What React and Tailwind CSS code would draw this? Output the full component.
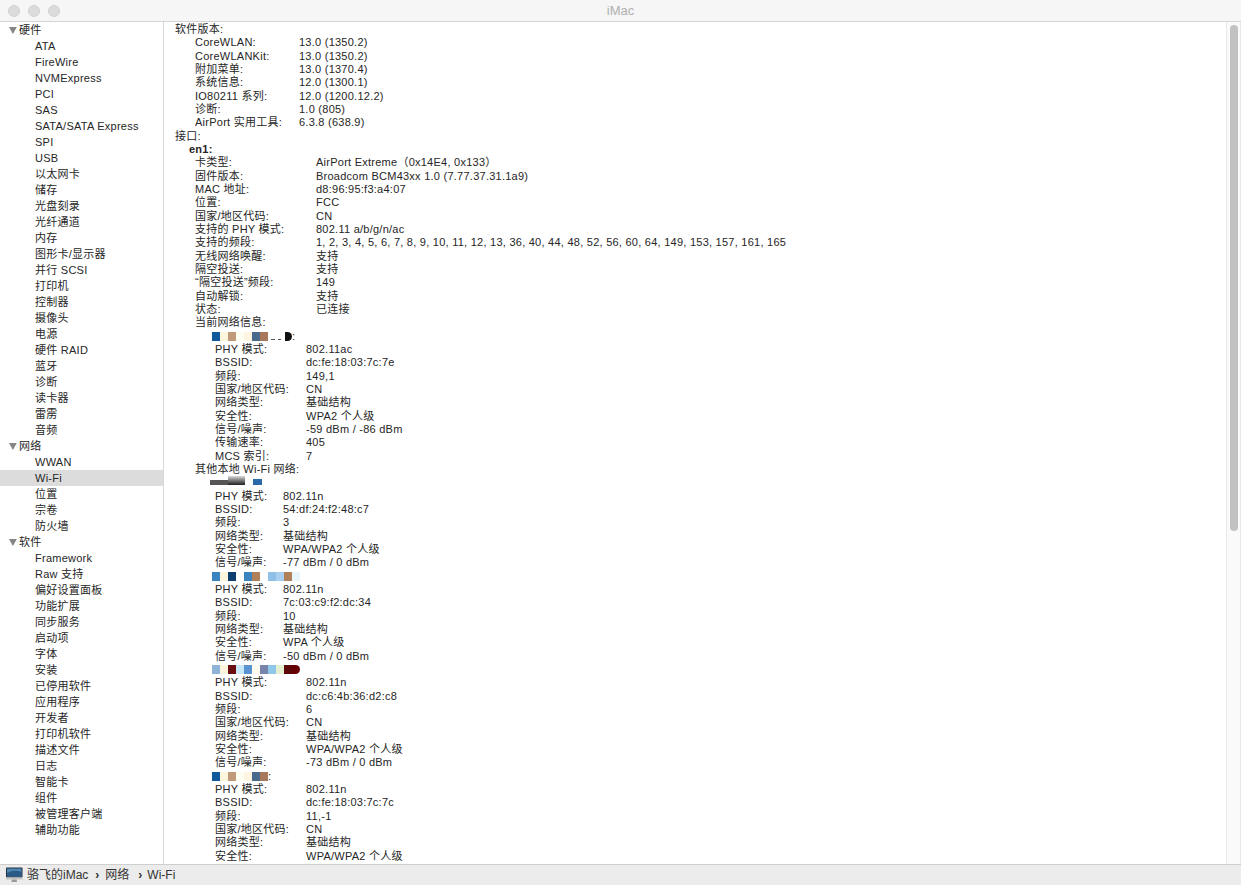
const FONT = "font-['Liberation_Sans','Noto_Sans_CJK_SC',sans-serif]";

const side = [
  ["硬件", 0], ["ATA"], ["FireWire"], ["NVMExpress"], ["PCI"], ["SAS"], ["SATA/SATA Express"], ["SPI"], ["USB"], ["以太网卡"], ["储存"], ["光盘刻录"], ["光纤通道"], ["内存"], ["图形卡/显示器"], ["并行 SCSI"], ["打印机"], ["控制器"], ["摄像头"], ["电源"], ["硬件 RAID"], ["蓝牙"], ["诊断"], ["读卡器"], ["雷雳"], ["音频"],
  ["网络", 0], ["WWAN"], ["Wi-Fi", 2], ["位置"], ["宗卷"], ["防火墙"],
  ["软件", 0], ["Framework"], ["Raw 支持"], ["偏好设置面板"], ["功能扩展"], ["同步服务"], ["启动项"], ["字体"], ["安装"], ["已停用软件"], ["应用程序"], ["开发者"], ["打印机软件"], ["描述文件"], ["日志"], ["智能卡"], ["组件"], ["被管理客户端"], ["辅助功能"],
];

function SideRow({ label, kind }) {
  const head = kind === 0;
  return (
    <div className={`flex h-4 items-center ${kind === 2 ? "bg-[#dcdcdc]" : ""} ${head ? "pl-[8px]" : "pl-[35px]"}`}>
      {head && <svg width="11" height="9" viewBox="0 0 11 9"><path d="M1 1h7.8L4.9 8z" fill="#858585" /></svg>}
      <span>{label}</span>
    </div>
  );
}

function Row({ pl, lw, label, value, bold }) {
  return (
    <div className={`flex h-[13.34px] items-center leading-[13px] whitespace-nowrap ${bold ? "font-bold" : ""}`} style={{ paddingLeft: pl }}>
      <span className="shrink-0" style={lw ? { width: lw } : undefined}>{label}</span>
      {value && <span>{value}</span>}
    </div>
  );
}

function Blur({ blocks, tail, round }) {
  return (
    <div className="flex h-[13.34px] items-center pl-[48px]">
      <div className="flex h-[9px] items-center">
        {blocks.map((c, i) => (
          <span key={i} className={`block h-[9px] w-[8px] ${round && i === blocks.length - 1 ? "rounded-r-full" : ""}`} style={{ backgroundColor: c }} />
        ))}
      </div>
      {tail}
    </div>
  );
}

function Net({ lw, rows }) {
  return rows.map(([l, v]) => <Row key={l} pl={51} lw={lw} label={l} value={v} />);
}

const sw = [
  ["CoreWLAN:", "13.0 (1350.2)"], ["CoreWLANKit:", "13.0 (1350.2)"], ["附加菜单:", "13.0 (1370.4)"], ["系统信息:", "12.0 (1300.1)"], ["IO80211 系列:", "12.0 (1200.12.2)"], ["诊断:", "1.0 (805)"], ["AirPort 实用工具:", "6.3.8 (638.9)"],
];
const card = [
  ["卡类型:", "AirPort Extreme（0x14E4, 0x133）"], ["固件版本:", "Broadcom BCM43xx 1.0 (7.77.37.31.1a9)"], ["MAC 地址:", "d8:96:95:f3:a4:07"], ["位置:", "FCC"], ["国家/地区代码:", "CN"], ["支持的 PHY 模式:", "802.11 a/b/g/n/ac"], ["支持的频段:", "1, 2, 3, 4, 5, 6, 7, 8, 9, 10, 11, 12, 13, 36, 40, 44, 48, 52, 56, 60, 64, 149, 153, 157, 161, 165"], ["无线网络唤醒:", "支持"], ["隔空投送:", "支持"], ["“隔空投送”频段:", "149"], ["自动解锁:", "支持"], ["状态:", "已连接"],
];

export default function App() {
  return (
    <div className={`flex h-[885px] w-[1241px] flex-col overflow-hidden bg-white text-[11px] tracking-[0.25px] text-[#262626] ${FONT}`}>
      <header className="flex h-[22px] shrink-0 items-center border-b border-[#d4d4d4] bg-[#f6f6f6] px-[8px] tracking-normal">
        <div className="flex flex-1 basis-0 gap-2">
          <span className="h-3 w-3 rounded-full border border-[#d2d2d2] bg-[#dcdcdc]" />
          <span className="h-3 w-3 rounded-full border border-[#d2d2d2] bg-[#dcdcdc]" />
          <span className="h-3 w-3 rounded-full border border-[#d2d2d2] bg-[#dcdcdc]" />
        </div>
        <div className="text-[13px] text-[#b0b0b0]">iMac</div>
        <div className="flex-1 basis-0" />
      </header>

      <div className="flex min-h-0 flex-1">
        <aside className="w-[164px] shrink-0 border-r border-[#d8d8d8]">
          {side.map(([l, k]) => <SideRow key={l} label={l} kind={k} />)}
        </aside>

        <main className="min-w-0 flex-1 overflow-hidden pt-[1px]">
          <Row pl={11} label="软件版本:" />
          {sw.map(([l, v]) => <Row key={l} pl={31} lw={104} label={l} value={v} />)}
          <Row pl={11} label="接口:" />
          <Row pl={25} label="en1:" bold />
          {card.map(([l, v]) => <Row key={l} pl={31} lw={121} label={l} value={v} />)}
          <Row pl={31} label="当前网络信息:" />
          <Blur
            blocks={["#0f5a9c", "#fdf5dc", "#c09a78", "#fdfdf0", "#fdf5e0", "#4a6a8c", "#a8785c"]}
            tail={
              <span className="flex items-center">
                <span className="mt-[7px] ml-[3px] h-[1px] w-[4px] bg-[#555555]" />
                <span className="mt-[7px] ml-[3px] h-[1px] w-[3px] bg-[#555555]" />
                <span className="ml-[4px] h-[9px] w-[7px] rounded-r-full bg-[#111111]" />
                <span>:</span>
              </span>
            }
          />
          <Net lw={91} rows={[["PHY 模式:", "802.11ac"], ["BSSID:", "dc:fe:18:03:7c:7e"], ["频段:", "149,1"], ["国家/地区代码:", "CN"], ["网络类型:", "基础结构"], ["安全性:", "WPA2 个人级"], ["信号/噪声:", "-59 dBm / -86 dBm"], ["传输速率:", "405"], ["MCS 索引:", "7"]]} />
          <Row pl={31} label="其他本地 Wi-Fi 网络:" />
          <div className="flex h-[13.34px] items-start overflow-hidden pl-[46px]">
            <span className="mt-[4px] h-[5px] w-[18px] bg-[#555555]" />
            <span className="h-[9px] w-[17px] bg-gradient-to-b from-[#dddddd] to-[#222222]" />
            <span className="mt-[3px] ml-[8px] h-[6px] w-[9px] bg-[#2a6aa8]" />
          </div>
          <Net lw={68} rows={[["PHY 模式:", "802.11n"], ["BSSID:", "54:df:24:f2:48:c7"], ["频段:", "3"], ["网络类型:", "基础结构"], ["安全性:", "WPA/WPA2 个人级"], ["信号/噪声:", "-77 dBm / 0 dBm"]]} />
          <Blur blocks={["#3a84c0", "#fdf5dc", "#0f3f70", "#ffffff", "#3a84c0", "#b08058", "#ffffff", "#90c0e8", "#a8d0f0", "#b08058", "#e8f6fc"]} />
          <Net lw={68} rows={[["PHY 模式:", "802.11n"], ["BSSID:", "7c:03:c9:f2:dc:34"], ["频段:", "10"], ["网络类型:", "基础结构"], ["安全性:", "WPA 个人级"], ["信号/噪声:", "-50 dBm / 0 dBm"]]} />
          <Blur round blocks={["#90b4d8", "#fdf5dc", "#6a0f10", "#c8e8f8", "#5a94d0", "#fdfaf0", "#7884ac", "#90c8ec", "#e4eed0", "#5a0808", "#660000"]} />
          <Net lw={91} rows={[["PHY 模式:", "802.11n"], ["BSSID:", "dc:c6:4b:36:d2:c8"], ["频段:", "6"], ["国家/地区代码:", "CN"], ["网络类型:", "基础结构"], ["安全性:", "WPA/WPA2 个人级"], ["信号/噪声:", "-73 dBm / 0 dBm"]]} />
          <Blur
            blocks={["#0f5a9c", "#fdf5dc", "#c09a78", "#fdfdf0", "#fdf5e0", "#4a6a8c", "#a8785c"]}
            tail={<span>:</span>}
          />
          <Net lw={91} rows={[["PHY 模式:", "802.11n"], ["BSSID:", "dc:fe:18:03:7c:7c"], ["频段:", "11,-1"], ["国家/地区代码:", "CN"], ["网络类型:", "基础结构"], ["安全性:", "WPA/WPA2 个人级"]]} />
        </main>

        <div className="flex w-[15px] shrink-0 justify-center border-x border-[#e8e8e8] bg-[#fafafa] pt-[3px]">
          <div className="h-[506px] w-[8px] rounded-full bg-[#c2c2c2]" />
        </div>
      </div>

      <footer className="flex h-[21px] shrink-0 items-center border-t border-[#cfcfcf] bg-[#ececec] pl-[6px] text-[12px] tracking-normal text-[#333333]">
        <svg width="17" height="16" viewBox="0 0 17 16" className="mr-[4px]">
          <rect x="0" y="0.5" width="16.5" height="10" rx="0.8" fill="#23303e" />
          <rect x="1" y="1.5" width="14.5" height="8" fill="#4e86b4" />
          <path d="M1 6 Q8 2 15.5 5 V9.5 H1z" fill="#2c5a86" />
          <rect x="0" y="10.5" width="16.5" height="2" fill="#c4c4c4" />
          <path d="M6 12.5h4.5l.6 2.5H5.4z" fill="#9a9a9a" />
        </svg>
        <span>骆飞的iMac</span>
        <span className="ml-[7px] mr-[6px] font-bold">›</span>
        <span>网络</span>
        <span className="ml-[9px] mr-[5px] font-bold">›</span>
        <span>Wi-Fi</span>
      </footer>
    </div>
  );
}
